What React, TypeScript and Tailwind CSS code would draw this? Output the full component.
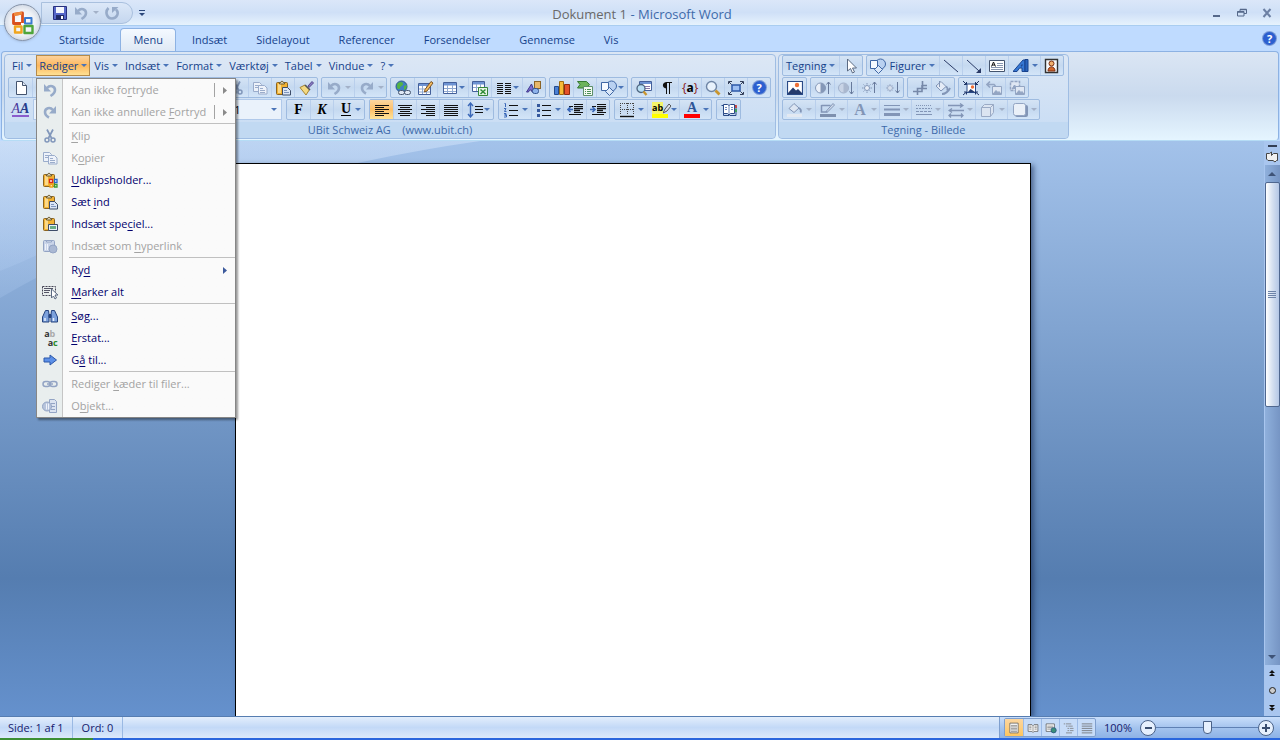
import { useState, type ReactNode } from 'react';
import clsx from 'clsx';

// --- Icons, all drawn on a 16x16 grid ---
const clipboard = (
  <>
    <rect x="1.500" y="2.500" width="11" height="12" rx="1" fill="#f2b233" stroke="#8a6420" />
    <path d="M3 4h3v9H3z" fill="#fbd98a" />
    <path d="M4.500 4V2.500h1.200C5.800.800 8.200.800 8.300 2.500h1.200V4z" fill="#e8dfc0" stroke="#6b5a30" />
  </>
);

const ICONS: Record<string, ReactNode> = {
  save: (
    <>
      <path d="M1.500 1.500h13v13h-13z" fill="#5566c8" stroke="#27307e" />
      <path d="M4 2h8v6H4z" fill="#f3f6fd" />
      <path d="M4 10h8v4.500H4z" fill="#1f2a66" />
      <path d="M9 11h2v3H9z" fill="#fff" />
    </>
  ),
  undo: (
    <>
      <path d="M5 6C8 2.500 13 4 13 8c0 3-2 4.500-4.500 6" fill="none" stroke="#97abc9" strokeWidth="2.600" />
      <path d="M2 2v7.500h7z" fill="#97abc9" />
    </>
  ),
  redo: (
    <>
      <path d="M11 6C8 2.500 3 4 3 8c0 3 2 4.500 4 5.500" fill="none" stroke="#97abc9" strokeWidth="2.600" />
      <path d="M14 2v7.500H7z" fill="#97abc9" />
    </>
  ),
  repeat: (
    <>
      <path d="M4.500 3C.500 7 3 13.500 8 13.500S15.500 8 12 4.500" fill="none" stroke="#97abc9" strokeWidth="2.600" />
      <path d="M8 8V2h6.500z" fill="#97abc9" />
    </>
  ),
  new: (
    <>
      <path d="M3.500 1.500h6l4 4v9h-10z" fill="#fff" stroke="#44546e" />
      <path d="M9.500 1.500v4h4" fill="#dfe7f3" stroke="#44546e" />
    </>
  ),
  open: <path d="M1.500 13.500v-9h5l1 1.500h6v7.500z" fill="#f5c65a" stroke="#94702b" />,
  mail: <path d="M1.500 4.500h13v8h-13zl6.500 5 6.500-5" fill="#fff" stroke="#55698c" />,
  print: (
    <>
      <path d="M4.500 1.500h7v5h-7z" fill="#fff" stroke="#55698c" />
      <path d="M1.500 6.500h13v6h-13z" fill="#c4cfe0" stroke="#55698c" />
    </>
  ),
  cut: (
    <g fill="none" stroke="#8197bb">
      <path d="M5 1.500 9.500 10M11 1.500 6.500 10" strokeWidth="1.700" />
      <circle cx="5" cy="12" r="2" strokeWidth="1.500" />
      <circle cx="11" cy="12" r="2" strokeWidth="1.500" />
    </g>
  ),
  copy: (
    <g fill="#edf2fa" stroke="#9aaccb">
      <path d="M1.500 2.500h6l2 2v7h-8z" />
      <path d="M3 5.500h4M3 7.500h4" />
      <path d="M6.500 5.500h6l2.500 2.500v6H6.500z" />
      <path d="M8 8.500h3M8 10.500h5M8 12.500h5" />
    </g>
  ),
  paste: (
    <>
      {clipboard}
      <path d="M7.500 7.500h5l3 3v4.500h-8z" fill="#dbe6f7" stroke="#3d4c68" />
      <path d="M9 10.500h3M9 12.500h5" stroke="#7f95bd" />
    </>
  ),
  clips: (
    <>
      {clipboard}
      <g fill="#fff" strokeWidth="1.300">
        <path d="M7.500 7.500h3v3h-3z" stroke="#d92a1c" />
        <path d="M12.500 7.500h2.500v3h-2.500z" stroke="#2867cc" />
        <path d="M8 12.500h2.500v2.500H8z" stroke="#eda216" />
        <path d="M12.500 12.500h2.500v2.500h-2.500z" stroke="#3a9a2e" />
      </g>
    </>
  ),
  pasteSpecial: (
    <>
      {clipboard}
      <path d="M6.500 8.500h9v6h-9z" fill="#e9f1fb" stroke="#3d4c68" />
      <path d="M8 10h6v3H8z" fill="#69ad86" />
    </>
  ),
  pasteLink: (
    <g stroke="#93a4c4">
      <rect x="1.500" y="2.500" width="11" height="11" rx="1" fill="#c9d4e8" />
      <path d="M4.500 4V2.500h5V4z" fill="#e6ecf6" />
      <path d="M3.500 6v6M5.500 6v6" stroke="#eef2fa" />
      <circle cx="11" cy="11" r="4" fill="#a9b8d3" />
    </g>
  ),
  brush: (
    <>
      <path d="m10 6 4-4.500L15.500 3 11 7.500z" fill="#8a7cc4" stroke="#54488c" />
      <path d="M2 7.500 7 5l4.500 4.500L8 15z" fill="#f3d981" stroke="#a78532" />
      <path d="m7 5 5 5" stroke="#555" strokeWidth="1.600" />
    </>
  ),
  globe: (
    <>
      <circle cx="6.500" cy="6.500" r="5.500" fill="#3f7fc4" stroke="#2c5a8a" />
      <path d="M3 3c3-2 5-1 5 1S5 6 5 8s-3 1-3-1 0-3 1-4zM9 6l3-1-1 4-2 1z" fill="#54b345" />
      <rect x="3.500" y="10.500" width="6" height="4" rx="2" fill="#dfe8f5" stroke="#46566f" />
      <rect x="9.500" y="10.500" width="6" height="4" rx="2" fill="#dfe8f5" stroke="#46566f" />
    </>
  ),
  tablePen: (
    <>
      <path d="M.500 3.500h12v11H.500z" fill="#fff" stroke="#44609a" />
      <path d="M1 4h11v2H1z" fill="#6d93d3" />
      <path d="M1 9h11M1 12h11M4.500 6v8M8.500 6v8" stroke="#8fa8d0" />
      <path d="m7 9.500 6-8 2 1.500-6 8-2.500 1z" fill="#f4bd62" stroke="#7c5220" />
    </>
  ),
  table: (
    <>
      <path d="M1.500 2.500h13v11h-13z" fill="#fff" stroke="#44609a" />
      <path d="M2 3h12v2.500H2z" fill="#6d93d3" />
      <path d="M2 8.500h12M2 11.500h12M5.500 5v8M10.500 5v8" stroke="#8fa8d0" />
    </>
  ),
  excel: (
    <>
      <path d="M.500 1.500h12v10H.500z" fill="#fff" stroke="#44609a" />
      <path d="M1 2h11v2.500H1z" fill="#6d93d3" />
      <path d="M1 7.500h11M4.500 4v7M8.500 4v7" stroke="#8fa8d0" />
      <path d="M6.500 7.500h9v8h-9z" fill="#e6f4e4" stroke="#34863a" />
      <path d="m8.500 9.500 5 4.500M13.500 9.500l-5 4.500" stroke="#2c8a34" strokeWidth="1.500" />
    </>
  ),
  columns: <path d="M1 3.500h6M1 5.500h6M1 7.500h6M1 9.500h6M1 11.500h6M1 13.500h6M9 3.500h6M9 5.500h6M9 7.500h6M9 9.500h6M9 11.500h6M9 13.500h6" stroke="#111" />,
  drawing: (
    <>
      <rect x="8.500" y="1.500" width="6" height="7" fill="#e7b76a" stroke="#8b6427" />
      <path d="m.500 12 5-8 3 8H6l-.500-2H3.500L2.500 12z" fill="#7a70d0" stroke="#40368c" />
      <rect x="6.500" y="8.500" width="6" height="5" rx="2" fill="#8db2ea" stroke="#33558f" />
    </>
  ),
  chart: (
    <>
      <path d="M.500 6.500h4v8h-4z" fill="#4a80d4" stroke="#244a8c" />
      <path d="M5.500 1.500h4v13h-4z" fill="#f7ba36" stroke="#a06c12" />
      <path d="M10.500 4.500h5v10h-5z" fill="#e4512a" stroke="#8f2a10" />
    </>
  ),
  smartArt: (
    <>
      <path d="M.500 1.500h9l3 3-3 3.500h-9l2.500-3.500z" fill="#6cb35c" stroke="#357a32" />
      <path d="M6.500 6.500h9v9h-9z" fill="#f5faf3" stroke="#5c8f6a" />
      <path d="M8 9.500h1M10 9.500h4M8 11.500h1M10 11.500h4M8 13.500h1M10 13.500h4" stroke="#4a8f55" />
    </>
  ),
  shapes: (
    <g stroke="#3f67a5">
      <circle cx="10.500" cy="6" r="5" fill="#b9d1f1" />
      <path d="M.500 2.500h7v8h-7z" fill="#f6faff" />
      <path d="m8.500 7.500 4 4-4 4-4-4z" fill="#dae7f8" />
    </g>
  ),
  docMap: (
    <>
      <path d="M3.500 1.500h12v9h-12z" fill="#fff" stroke="#44609a" />
      <path d="M4 2h11v2H4z" fill="#6d93d3" />
      <path d="M9 6.500h5M9 8.500h5" stroke="#87a" />
      <circle cx="5" cy="8.500" r="4" fill="#b9e0f4" stroke="#4d647f" strokeWidth="1.300" />
      <path d="m7.500 11.500 3 3.500" stroke="#c9962f" strokeWidth="2.400" />
    </>
  ),
  pilcrow: (
    <>
      <path d="M8 2C2.500 2 2.500 8.500 8 8.500z" fill="#111" />
      <path d="M7.500 2v12M10.500 2v12M7 2.500h6" fill="none" stroke="#111" />
    </>
  ),
  zoom: (
    <>
      <circle cx="6.500" cy="6.500" r="5" fill="#e8f2fc" stroke="#6f86a6" strokeWidth="1.400" />
      <path d="m10.500 10.500 4 4" stroke="#c9962f" strokeWidth="2.800" />
    </>
  ),
  fit: (
    <>
      <rect x="4" y="5" width="8" height="6" fill="#9dbff2" stroke="#2d58a8" strokeWidth="1.500" />
      <path d="M.500 4V1.500H4M1 2l2.500 2.500M12 1.500h3.500V4M15 2l-2.500 2.500M.500 12v2.500H4M1 14l2.500-2.500M12 14.500h3.500V12M15 14l-2.500-2.500" fill="none" stroke="#333e58" />
    </>
  ),
  alignLeft: <path d="M1 3.500h14M1 5.500h9M1 7.500h14M1 9.500h9M1 11.500h14M1 13.500h9" stroke="#111" />,
  alignCenter: <path d="M1 3.500h14M3 5.500h10M1 7.500h14M3 9.500h10M1 11.500h14M3 13.500h10" stroke="#111" />,
  alignRight: <path d="M1 3.500h14M6 5.500h9M1 7.500h14M6 9.500h9M1 11.500h14M6 13.500h9" stroke="#111" />,
  justify: <path d="M1 3.500h14M1 5.500h14M1 7.500h14M1 9.500h14M1 11.500h14M1 13.500h14" stroke="#111" />,
  spacing: (
    <>
      <path d="M8 4.500h8M8 7.500h8M8 10.500h8" stroke="#111" />
      <path d="M3.500 1v14M1 4l2.500-3L6 4M1 12l2.500 3L6 12" fill="none" stroke="#3b68b8" strokeWidth="1.400" />
    </>
  ),
  numbers: (
    <>
      <path d="M6 3.500h9M6 8.500h9M6 13.500h9" stroke="#111" />
      <path d="M1.500 1.500h1V5M1 6.500h2L1.500 9.500h2M1 11.500h2v1.500H1.500h2v2H1" fill="none" stroke="#3b68b8" />
    </>
  ),
  bullets: (
    <>
      <path d="M6 3.500h9M6 8.500h9M6 13.500h9" stroke="#111" />
      <path d="M1 2h3v3H1zM1 7h3v3H1zM1 12h3v3H1z" fill="#35589d" />
    </>
  ),
  outdent: (
    <>
      <path d="M7 2.500h9M2 4.500h4M7 4.500h9M7 10.500h9M2 12.500h12" stroke="#111" />
      <path d="M7 6.500h9M7 8.500h6" stroke="#111" strokeWidth="1.600" />
      <path d="M.500 7.500h5.500M3.500 5l-2.500 2.500L3.500 10" fill="none" stroke="#3b68b8" strokeWidth="1.600" />
    </>
  ),
  indent: (
    <>
      <path d="M7 2.500h9M2 4.500h4M7 4.500h9M7 10.500h9M2 12.500h12" stroke="#111" />
      <path d="M7 6.500h9M7 8.500h6" stroke="#111" strokeWidth="1.600" />
      <path d="M0 7.500h5.500M2.500 5 5 7.500 2.500 10" fill="none" stroke="#3b68b8" strokeWidth="1.600" />
    </>
  ),
  border: (
    <>
      <path d="M1.500 1v12M14.500 1v12M8.500 1v12M1 1.500h14M1 7.500h14" stroke="#444" strokeDasharray="1 1" />
      <path d="M1 14.500h14" stroke="#111" strokeWidth="1.400" />
    </>
  ),
  book: (
    <>
      <path d="M.500 3.500h2v10h5.500l.500.500.500-.500h6v-10h-2" fill="#c7d9f2" stroke="#2a4a86" />
      <path d="M2.500 2.500h4l1.500 1 1.500-1h4v9h-4L8 13l-1.500-1.500h-4z" fill="#fff" stroke="#2a4a86" />
      <path d="M8 4v8M4 5.500h2M4 7.500h2M10 5.500h2M10 7.500h2" stroke="#6c8ac0" />
      <path d="M15 3v3" stroke="#d32" strokeWidth="1.500" />
      <path d="M15 7v3" stroke="#3a3" strokeWidth="1.500" />
    </>
  ),
  cursor: <path d="M4.500 1v12l3-2.500L9.500 15l2-1-2-4h4z" fill="#fff" stroke="#5b6a82" />,
  line: <path d="m1 2 14 12" stroke="#2a3a66" />,
  arrow: (
    <>
      <path d="m1 2 12 11" stroke="#2a3a66" />
      <path d="M15 15v-5l-5 5z" fill="#2a3a66" />
    </>
  ),
  textBox: (
    <>
      <path d="M.500 2.500h15v11H.500z" fill="#fff" stroke="#44546e" />
      <path d="M2.500 8.500 4.500 4l2 4.500M3 7h3" fill="none" stroke="#111" />
      <path d="M8 5.500h6M8 7.500h6M2 9.500h12M2 11.500h12" stroke="#8796b0" />
    </>
  ),
  wordArt: (
    <>
      <path d="M0 13.500 10 2h2v11.500H9v-3.500H6.500L4 13.500zM8 8h1V6.500z" fill="#3678d4" stroke="#1c4690" />
      <path d="M12 1.500h3v12h-3z" fill="#2a64bc" stroke="#17408c" />
    </>
  ),
  person: (
    <>
      <path d="M1.500 1.500h12v13h-12z" fill="#f6f8fb" stroke="#333" strokeWidth="1.400" />
      <circle cx="7.500" cy="5.500" r="2.500" fill="#f1b06e" stroke="#7d2f12" />
      <path d="M4 13c0-5.500 7-5.500 7 0z" fill="#d3682c" stroke="#7d2f12" />
    </>
  ),
  picture: (
    <>
      <path d="M.500 1.500h15v13H.500z" fill="#fff" stroke="#2a4a86" strokeWidth="1.200" />
      <circle cx="10" cy="5" r="2.200" fill="#ee7038" />
      <path d="m1 13 5-5.500 3 3 2-1.500 4 4v1H1z" fill="#243b6e" />
    </>
  ),
  contrastUp: (
    <>
      <circle cx="5.500" cy="8" r="5" fill="#eaf0f9" stroke="#8598b8" />
      <path d="M5.500 3a5 5 0 0 1 0 10z" fill="#8598b8" />
      <path d="M13.500 2v12M11.500 4.500l2-2.500 2 2.500" fill="none" stroke="#67799b" />
    </>
  ),
  contrastDown: (
    <>
      <circle cx="5.500" cy="8" r="5" fill="#c9d4e6" stroke="#9fafca" />
      <path d="M5.500 3a5 5 0 0 1 0 10z" fill="#aab8cf" />
      <path d="M13.500 2v12M11.500 11.500l2 2.500 2-2.500" fill="none" stroke="#67799b" />
    </>
  ),
  brightUp: (
    <g fill="none" stroke="#8598b8">
      <circle cx="6" cy="8" r="2.500" fill="#eaf0f9" />
      <path d="M6 3v1.500M6 11.500V13M1 8h1.500M9.500 8H11M2.500 4.500l1 1M9.500 4.500l-1 1M2.500 11.500l1-1M9.500 11.500l-1-1" />
      <path d="M13.500 2v11M11.500 4.500l2-2.500 2 2.500" stroke="#67799b" />
    </g>
  ),
  brightDown: (
    <g fill="none" stroke="#9fafca">
      <circle cx="6" cy="8" r="2.500" fill="#d6dfed" />
      <path d="M6 4v1M6 11v1M2 8h1M9 8h1M3.500 5.500l.500.500M8.500 5.500 8 6M3.500 10.500 4 10M8.500 10.500 8 10" />
      <path d="M13.500 2v11M11.500 10.500l2 2.500 2-2.500" stroke="#67799b" />
    </g>
  ),
  crop: <path d="M5.500 15V8.500H15M1 11.500h9V5M10 5.500h5M10.500 1v7" fill="none" stroke="#7688a8" strokeWidth="1.600" />,
  bucket: (
    <g stroke="#8295b6">
      <path d="m1 6 5-4.500 5 5L6 11z" fill="#e4ebf6" />
      <path d="M4.500 1v6" fill="none" />
      <path d="M11 6.500c2 1 1.500 3 1 4" fill="none" strokeWidth="1.500" />
      <path d="M7 14c3 0 6-2 8-6" fill="none" strokeWidth="2" />
    </g>
  ),
  compress: (
    <>
      <path d="M4 4h8.500v8.500H4z" fill="#fff" stroke="#2a4a86" />
      <circle cx="9.500" cy="7" r="1.700" fill="#ee7038" />
      <path d="m5 12 2.500-3 4.500 3z" fill="#243b6e" />
      <path d="m0 1 3.500 3.500M3.500 2v2.500H1M16 1l-3.500 3.500M12.500 2v2.500H15M0 15l3.500-3M3.500 14.500V12H1M16 15l-3.500-3M12.500 14.500V12H15" fill="none" stroke="#1f3568" />
    </>
  ),
  reset: (
    <g stroke="#93a5c3">
      <path d="M6.500 6.500h9v8h-9z" fill="#dfe7f3" />
      <path d="m7 14 3-3.500 2 2 1-1 2 2.500z" fill="#93a5c3" />
      <path d="M4 1.500 1 4.500l3 3M1.500 4.500H8L9.500 6" fill="none" strokeWidth="1.700" />
    </g>
  ),
  group: (
    <g stroke="#93a5c3">
      <path d="M1.500 1.500h9v9h-9z" fill="#dfe7f3" strokeWidth="1.500" strokeDasharray="3 1" />
      <path d="m3 9 2.500-4L8 8z" fill="#93a5c3" />
      <path d="M6.500 6.500h9v8h-9z" fill="#dfe7f3" />
      <path d="m7 14 3-3.500 2 2 1-1 2 2.500z" fill="#93a5c3" />
    </g>
  ),
  fill: (
    <g stroke="#8295b6">
      <path d="m2 6.500 5-5L12 6 7 10.500z" fill="#dce5f2" />
      <path d="M12 6c2.500 1.500 2 3.500 1.500 4.500" fill="none" strokeWidth="1.700" />
      <path d="M0 13.500h15" stroke="#e3e9f2" strokeWidth="3" />
    </g>
  ),
  pen: (
    <>
      <path d="M1.500 3.500h9M1.500 3v7h6" fill="none" stroke="#8295b6" strokeWidth="1.500" />
      <path d="m6 9.500 7-8 1.500 1.500-7 7z" fill="#cfdaea" stroke="#8295b6" />
      <path d="M0 13.500h16" stroke="#7e90ae" strokeWidth="3" />
    </>
  ),
  lineStyle: (
    <>
      <path d="M0 3.500h16" stroke="#8295b6" />
      <path d="M0 7.500h16" stroke="#8295b6" strokeWidth="2" />
      <path d="M0 12.500h16" stroke="#8295b6" strokeWidth="3" />
    </>
  ),
  dashes: (
    <g stroke="#8295b6">
      <path d="M0 3.500h16" strokeDasharray="1 1" />
      <path d="M0 6.500h16" strokeDasharray="2 1" />
      <path d="M0 9.500h16" strokeDasharray="3 1" />
      <path d="M0 12.500h16" />
    </g>
  ),
  arrows: (
    <g fill="none" stroke="#8295b6" strokeWidth="1.300">
      <path d="M0 3.500h14M12 1.500l3 2-3 2" />
      <path d="M2 8.500h14M4 6.500l-3 2 3 2" />
      <path d="M1 13.500h14M3 11.500l-2 2 2 2M13 11.500l2 2-2 2" />
    </g>
  ),
  cube: (
    <g fill="#dbe4f1" stroke="#9aaac5">
      <path d="m1.500 5.500 3-3h9v8l-3 4" />
      <path d="M1.500 5.500h9v9h-9zM10.500 5.500l3-3" />
    </g>
  ),
  shadow: (
    <>
      <rect x="3" y="3" width="13" height="12" rx="2" fill="#8295b6" />
      <rect x="1.500" y="1.500" width="12" height="12" rx="2" fill="#eaf0f8" stroke="#93a5c3" />
    </>
  ),
  select: (
    <>
      <path d="M.500 2.500h13v9H.500z" fill="none" stroke="#445" strokeDasharray="2 1" />
      <path d="M2 4.500h9M2 6.500h6M2 8.500h5" stroke="#556" />
      <path d="M9.500 5v9l2-2 1.500 3 1.500-1-1.500-3h3z" fill="#fff" stroke="#5b6a82" />
    </>
  ),
  find: (
    <g fill="#7ca1dc" stroke="#24437f">
      <path d="M3.500 2.500h3l.500 4v7.500H.500V9z" />
      <path d="M9.500 2.500h3l3 6.500v5H9V6.500z" />
      <path d="M7 6.500h2v3H7z" fill="#24437f" />
      <path d="M3 10v3M11.500 10v3" stroke="#e6effc" strokeWidth="1.500" />
    </g>
  ),
  goto: <path d="M2 6h6V3l6.500 5L8 13v-3H2z" fill="#5c90e8" stroke="#2b57a8" />,
  link: (
    <g fill="none" stroke="#93a4c4" strokeWidth="1.500">
      <rect x="1" y="5.500" width="7" height="5" rx="2.500" />
      <rect x="8" y="5.500" width="7" height="5" rx="2.500" />
      <path d="M5 8h6" />
    </g>
  ),
  object: (
    <g fill="#dbe3f0" stroke="#93a4c4">
      <path d="M7.500 1.500h5l2 2v11h-7z" />
      <path d="M9 5.500h4M9 8.500h4M9 11.500h4" />
      <circle cx="5" cy="8.500" r="4.500" fill="#b7c4dc" />
      <path d="M4.500 5.500v6M6.500 5.500v6" stroke="#eef2fa" />
    </g>
  ),
  pageView: (
    <>
      <path d="M2.500 1.500h11v13h-11z" fill="#fff" stroke="#555" />
      <path d="M4 4.500h8M4 6.500h8M4 8.500h8M4 10.500h8M4 12.500h8" stroke="#777" />
    </>
  ),
  readView: (
    <>
      <path d="M1.500 3.500h5L8 5l1.500-1.500h5v9h-5L8 14l-1.500-1.500h-5z" fill="#fff" stroke="#555" />
      <path d="M8 5v8M3 5.500h3M3 7.500h3M3 9.500h3M10 5.500h3M10 7.500h3M10 9.500h3" stroke="#777" />
    </>
  ),
  webView: (
    <>
      <path d="M1.500 2.500h11v10h-11z" fill="#fff" stroke="#555" />
      <path d="M3 5.500h8M3 7.500h8M3 9.500h5" stroke="#777" />
      <circle cx="11.500" cy="11" r="3.500" fill="#3a8f7a" stroke="#25527f" />
    </>
  ),
  outlineView: <path d="M1 2.500h2M4 2.500h7M4 5.500h2M7 5.500h6M6 8.500h2M9 8.500h5M6 11.500h2M9 11.500h5M4 14.500h8" stroke="#777" />,
  draftView: <path d="M1 2.500h14M1 5.500h14M1 8.500h14M1 11.500h14M1 14.500h14" stroke="#666" />,
};

// letter glyphs are kept as text
const TEXT_ICONS: Record<string, ReactNode> = {
  bold: <span className="font-['Liberation_Serif',serif] text-sm font-bold text-black">F</span>,
  italic: <span className="font-['Liberation_Serif',serif] text-sm font-bold italic text-black">K</span>,
  underline: <span className="border-b border-black font-['Liberation_Serif',serif] text-sm leading-3 font-bold text-black">U</span>,
  styles: (
    <span className="border-b-2 border-[#8a5ccc] font-['Liberation_Serif',serif] text-sm leading-3 italic text-[#4a3a9c]">
      A<b className="text-[#253c8c]">A</b>
    </span>
  ),
  codes: (
    <span className="text-xs font-bold text-black">
      <span className="font-normal text-[#8c1a1a]">{'{'}</span>a<span className="font-normal text-[#8c1a1a]">{'}'}</span>
    </span>
  ),
  highlight: (
    <span className="flex h-4 w-4 flex-col justify-between">
      <span className="flex text-[9px] leading-3 font-bold text-black">
        <span className="bg-[#f4f46a]">ab</span>
        <svg className="h-3 w-2 shrink-0" viewBox="0 0 8 12"><path d="m0 11 2-4 4-5 2 2-4 5z" fill="#d9dfe8" stroke="#555" /></svg>
      </span>
      <span className="h-1 bg-[#ffff00]" />
    </span>
  ),
  fontColor: <span className="flex h-4 w-4 flex-col items-center justify-between border-b-4 border-[#ff0000] font-['Liberation_Serif',serif] text-sm leading-3 font-bold text-[#2f5597]">A</span>,
  letterGrey: <span className="font-['Liberation_Serif',serif] text-base font-bold text-[#8295b6]">A</span>,
  replace: (
    <span className="flex w-4 flex-col text-[9px] leading-none font-bold text-[#333]">
      <span>a<span className="text-[#aaa]">b</span></span>
      <span className="self-end">a<span className="text-[#2a8a2a]">c</span></span>
    </span>
  ),
  help: (
    <span className="flex size-[13px] items-center justify-center rounded-full bg-[#2c5fd0] text-[11px] leading-3 font-bold text-white ring-1 ring-[#7d9cd6]">?</span>
  ),
};

function Icon({ name }: { name: string }) {
  if (TEXT_ICONS[name]) return TEXT_ICONS[name];
  return <svg viewBox="0 0 16 16" className="size-4 shrink-0" aria-hidden="true">{ICONS[name]}</svg>;
}

function Caret({ muted }: { muted?: boolean }) {
  return (
    <svg viewBox="0 0 6 3" className="h-[3px] w-1.5 shrink-0" aria-hidden="true">
      <path d="M0 0h6L3 3z" fill={muted ? '#a3b1c8' : '#4a74b8'} />
    </svg>
  );
}

// --- Toolbars ---
interface Tool {
  icon: string;
  label: string;
  split?: 'narrow' | 'wide';
  active?: boolean;
  disabled?: boolean;
  text?: boolean;
}

const CLIP_TOOLS: Tool[] = [
  { icon: 'new', label: 'Ny' },
  { icon: 'open', label: 'Åbn' },
  { icon: 'save', label: 'Gem' },
  { icon: 'mail', label: 'E-mail' },
  { icon: 'print', label: 'Udskriv' },
  { icon: 'zoom', label: 'Vis udskrift' },
  { icon: 'book', label: 'Stavekontrol' },
  { icon: 'docMap', label: 'Opslag', split: 'wide' },
  { icon: 'table', label: 'Oversæt' },
  { icon: 'cut', label: 'Klip', disabled: true },
  { icon: 'copy', label: 'Kopier', disabled: true },
  { icon: 'paste', label: 'Sæt ind' },
  { icon: 'brush', label: 'Formatpensel' },
];

const ROW_ONE: Tool[][] = [
  CLIP_TOOLS,
  [
    { icon: 'undo', label: 'Fortryd', split: 'wide', disabled: true },
    { icon: 'redo', label: 'Annuller Fortryd', split: 'wide', disabled: true },
  ],
  [
    { icon: 'globe', label: 'Hyperlink' },
    { icon: 'tablePen', label: 'Tegn tabel' },
    { icon: 'table', label: 'Indsæt tabel', split: 'narrow' },
    { icon: 'excel', label: 'Excel-regneark' },
    { icon: 'columns', label: 'Kolonner', split: 'narrow' },
    { icon: 'drawing', label: 'Tegning' },
  ],
  [
    { icon: 'chart', label: 'Diagram' },
    { icon: 'smartArt', label: 'SmartArt' },
    { icon: 'shapes', label: 'Figurer', split: 'narrow' },
  ],
  [
    { icon: 'docMap', label: 'Dokumentoversigt' },
    { icon: 'pilcrow', label: 'Vis alt' },
    { icon: 'codes', label: 'Feltkoder' },
    { icon: 'zoom', label: 'Zoom' },
    { icon: 'fit', label: 'Fuld skærm' },
    { icon: 'help', label: 'Hjælp til Word' },
  ],
];

const ROW_TWO: Tool[][] = [
  [
    { icon: 'bold', label: 'Fed' },
    { icon: 'italic', label: 'Kursiv' },
    { icon: 'underline', label: 'Understreget', split: 'narrow' },
  ],
  [
    { icon: 'alignLeft', label: 'Venstrejuster', active: true },
    { icon: 'alignCenter', label: 'Centrer' },
    { icon: 'alignRight', label: 'Højrejuster' },
    { icon: 'justify', label: 'Lige margener' },
    { icon: 'spacing', label: 'Linjeafstand', split: 'narrow' },
  ],
  [
    { icon: 'numbers', label: 'Nummerering', split: 'wide' },
    { icon: 'bullets', label: 'Punkttegn', split: 'wide' },
    { icon: 'outdent', label: 'Formindsk indrykning' },
    { icon: 'indent', label: 'Forøg indrykning' },
  ],
  [
    { icon: 'border', label: 'Kanter', split: 'wide' },
    { icon: 'highlight', label: 'Fremhævning', split: 'wide' },
    { icon: 'fontColor', label: 'Skriftfarve', split: 'wide' },
  ],
  [{ icon: 'book', label: 'Opslag' }],
];

const DRAW_ROWS: Tool[][][] = [
  [
    [
      { icon: '', label: 'Tegning', text: true },
      { icon: 'cursor', label: 'Marker objekter' },
    ],
    [
      { icon: 'shapes', label: 'Figurer', text: true },
      { icon: 'line', label: 'Streg' },
      { icon: 'arrow', label: 'Pil' },
      { icon: 'textBox', label: 'Tekstboks' },
      { icon: 'wordArt', label: 'WordArt', split: 'wide' },
      { icon: 'person', label: 'Multimedieklip' },
    ],
  ],
  [
    [{ icon: 'picture', label: 'Billede' }],
    [
      { icon: 'contrastUp', label: 'Mere kontrast', disabled: true },
      { icon: 'contrastDown', label: 'Mindre kontrast', disabled: true },
      { icon: 'brightUp', label: 'Mere lysstyrke', disabled: true },
      { icon: 'brightDown', label: 'Mindre lysstyrke', disabled: true },
    ],
    [
      { icon: 'crop', label: 'Beskær', disabled: true },
      { icon: 'bucket', label: 'Omfarv', disabled: true },
    ],
    [
      { icon: 'compress', label: 'Komprimer billeder' },
      { icon: 'reset', label: 'Nulstil billede', disabled: true },
      { icon: 'group', label: 'Gruppér', disabled: true },
    ],
  ],
  [
    [
      { icon: 'fill', label: 'Fyldfarve', split: 'wide', disabled: true },
      { icon: 'pen', label: 'Stregfarve', split: 'wide', disabled: true },
      { icon: 'letterGrey', label: 'Tekstfarve', split: 'wide', disabled: true },
      { icon: 'lineStyle', label: 'Stregtype', split: 'wide', disabled: true },
      { icon: 'dashes', label: 'Stiplet streg', split: 'wide', disabled: true },
      { icon: 'arrows', label: 'Piletype', split: 'wide', disabled: true },
      { icon: 'cube', label: '3D-effekt', split: 'wide', disabled: true },
      { icon: 'shadow', label: 'Skygge', split: 'wide', disabled: true },
    ],
  ],
];

function ToolButton({ tool }: { tool: Tool }) {
  if (tool.text) {
    return (
      <button type="button" className="flex items-center gap-[3px] pr-1 pl-[3px] text-[#15428b]">
        {tool.icon && <Icon name={tool.icon} />}
        <span>{tool.label}</span>
        <Caret />
      </button>
    );
  }
  return (
    <button
      type="button"
      aria-label={tool.label}
      disabled={tool.disabled}
      className={clsx(
        'flex items-center border-l border-[#b9cfec] first:border-l-0',
        tool.active && 'bg-linear-to-b from-[#fbd6a0] via-[#fdc068] to-[#fee49a]',
        !tool.split && 'w-[23px] justify-center',
        tool.split === 'narrow' && 'w-[31px] pl-[3px]',
        tool.split === 'wide' && 'w-8 gap-0.5 pl-[3px]',
      )}
    >
      <span className="flex w-[18px] shrink-0 items-center justify-center"><Icon name={tool.icon} /></span>
      {tool.split && <Caret muted={tool.disabled} />}
    </button>
  );
}

function ToolGroup({ tools }: { tools: Tool[] }) {
  return (
    <div className="flex h-[21px] rounded-xs border border-[#9ebbe0] bg-linear-to-b from-[#d5e4f5] via-[#c5d9f0] to-[#d3e5f8]">
      {tools.map(t => <ToolButton key={t.label} tool={t} />)}
    </div>
  );
}

// --- Rediger menu. An underscore stands before the access key ---
interface MenuEntry {
  label?: string;
  icon?: string;
  disabled?: boolean;
  sub?: boolean;
  bar?: boolean;
}

const MENU: MenuEntry[] = [
  { label: 'Kan ikke fo_rtryde', icon: 'undo', disabled: true, sub: true, bar: true },
  { label: 'Kan ikke annullere _Fortryd', icon: 'redo', disabled: true, sub: true, bar: true },
  {},
  { label: '_Klip', icon: 'cut', disabled: true },
  { label: 'K_opier', icon: 'copy', disabled: true },
  { label: '_Udklipsholder...', icon: 'clips' },
  { label: 'Sæt _ind', icon: 'paste' },
  { label: 'Indsæt spe_ciel...', icon: 'pasteSpecial' },
  { label: 'Indsæt som _hyperlink', icon: 'pasteLink', disabled: true },
  {},
  { label: 'Ry_d', sub: true },
  { label: '_Marker alt', icon: 'select' },
  {},
  { label: '_Søg...', icon: 'find' },
  { label: '_Erstat...', icon: 'replace' },
  { label: 'G_å til...', icon: 'goto' },
  {},
  { label: 'Rediger _kæder til filer...', icon: 'link', disabled: true },
  { label: 'O_bjekt...', icon: 'object', disabled: true },
];

function MenuLabel({ text }: { text: string }) {
  const i = text.indexOf('_');
  return (
    <span className="flex-1 text-left whitespace-pre">
      {text.slice(0, i)}
      <span className="underline underline-offset-2">{text[i + 1]}</span>
      {text.slice(i + 2)}
    </span>
  );
}

function EditMenu() {
  return (
    <div
      role="menu"
      className="absolute top-full left-0 z-20 mt-0.5 w-[200px] border border-[#868686] bg-[#fafafa] bg-linear-to-r from-[#e9eeee] from-[25px] to-[#fafafa] to-[25px] shadow-[2px_2px_2px_rgba(0,0,0,0.4)]"
    >
      {MENU.map((m, i) =>
        m.label ? (
          <button
            key={m.label}
            type="button"
            role="menuitem"
            disabled={m.disabled}
            className={clsx('flex h-[22px] w-full items-center pr-2', m.disabled ? 'text-[#a3a3a3]' : 'text-[#00006d]')}
          >
            <span className="mr-2 flex h-full w-[26px] shrink-0 items-center justify-center border-r border-[#c5c5c5]">
              {m.icon && <Icon name={m.icon} />}
            </span>
            <MenuLabel text={m.label} />
            {m.bar && <span className="mr-2 h-3.5 w-px bg-[#a3a3a3]" />}
            {m.sub && (
              <svg viewBox="0 0 4 7" className="h-[7px] w-1" aria-hidden="true">
                <path d="M0 0v7l4-3.500z" fill={m.disabled ? '#8a8a8a' : '#3c5a9c'} />
              </svg>
            )}
          </button>
        ) : (
          <div key={i} role="separator" className="flex h-0.5">
            <span className="mr-1.5 w-[26px] border-r border-[#c5c5c5]" />
            <span className="h-px flex-1 bg-[#c0c0c0]" />
          </div>
        )
      )}
    </div>
  );
}

const MENUS = ['Fil', 'Rediger', 'Vis', 'Indsæt', 'Format', 'Værktøj', 'Tabel', 'Vindue', '?'];
const TABS = ['Startside', 'Menu', 'Indsæt', 'Sidelayout', 'Referencer', 'Forsendelser', 'Gennemse', 'Vis'];
const VIEWS = [
  { icon: 'pageView', label: 'Udskriftslayout' },
  { icon: 'readView', label: 'Fuldskærmslæsning' },
  { icon: 'webView', label: 'Weblayout' },
  { icon: 'outlineView', label: 'Disposition' },
  { icon: 'draftView', label: 'Kladde' },
];

function Panel({ title, children }: { title: ReactNode; children: ReactNode }) {
  return (
    <section className="flex flex-col rounded-sm border border-[#9fbde3] bg-linear-to-b from-[#dce7f5] to-[#c7dcf4]">
      <div className="flex flex-col gap-px pr-1 pl-[3px]">{children}</div>
      <h2 className="mt-0.5 h-4 rounded-b-sm bg-[#c1d9f2] text-center leading-4 whitespace-pre text-[#3e6aaa]">{title}</h2>
    </section>
  );
}

function Combo({ label, value, className }: { label: string; value: string; className: string }) {
  return (
    <div className={clsx('flex h-[21px] items-center border border-[#b0c9ea] bg-[#eaf2fb] pr-1', className)}>
      <select aria-label={label} className="min-w-0 flex-1 appearance-none pl-1 text-black outline-none">
        <option>{value}</option>
      </select>
      <Caret />
    </div>
  );
}

function TitleBar() {
  return (
    <header className="relative grid h-[26px] grid-cols-[1fr_auto_1fr] items-center border-b border-[#a9cdf0] bg-linear-to-b from-[#dbe7f9] via-[#cfe0f7] to-[#e6f2fd]">
      <button
        type="button"
        aria-label="Office-knap"
        className="absolute top-1 left-1 z-10 flex size-[37px] items-center justify-center rounded-full border border-[#8693a8] bg-radial from-white via-[#eef1f6] to-[#b4c0d3] shadow-sm"
      >
        <svg viewBox="0 0 24 24" className="size-6" fill="none" strokeLinejoin="round">
          <path d="M10 12.500H2.500V3.500L11.500 2v10" stroke="#d9501e" strokeWidth="2.800" />
          <path d="M14 7h6.500v5.500H14z" stroke="#3a7ad0" strokeWidth="2" />
          <path d="M4 15.500h6.500v6H4z" stroke="#f0a51e" strokeWidth="2.400" />
          <path d="M13.500 22h8v-7h-8z" stroke="#4fa53a" strokeWidth="2.400" />
          <path d="M3 3.500 11 2" stroke="#f08a3c" strokeWidth="2.800" />
        </svg>
      </button>
      <div className="flex items-center pl-[41px]">
        <div className="flex h-[22px] items-center gap-[5px] rounded-r-full border border-[#a9c0de] bg-linear-to-b from-[#dce8f8] to-[#c5d7ef] pr-3 pl-2.5">
          <button type="button" aria-label="Gem"><Icon name="save" /></button>
          <button type="button" aria-label="Fortryd" disabled className="flex items-center gap-1"><Icon name="undo" /><Caret muted /></button>
          <button type="button" aria-label="Gentag" disabled><Icon name="repeat" /></button>
        </div>
        <button type="button" aria-label="Tilpas værktøjslinjen Hurtig adgang" className="ml-1.5 flex flex-col items-center gap-0.5">
          <span className="h-px w-1.5 bg-[#2b477a]" />
          <svg viewBox="0 0 6 3" className="h-[3px] w-1.5"><path d="M0 0h6L3 3z" fill="#2b477a" /></svg>
        </button>
      </div>
      <h1 className="pt-0.5 pl-1 text-[13px] text-[#3e6aaa]"><span className="text-[#696969]">Dokument 1</span> - Microsoft Word</h1>
      <div className="flex items-center justify-end gap-[15px] pr-2">
        <button type="button" aria-label="Minimer"><svg viewBox="0 0 10 10" className="size-2.5"><path d="M1 8h7" stroke="#55688a" strokeWidth="2" /></svg></button>
        <button type="button" aria-label="Gendan">
          <svg viewBox="0 0 10 10" className="size-2.5" fill="none" stroke="#55688a">
            <path d="M3 3.500v-2h6.500v4H7" /><path d="M3 1.500h6.500M.500 4h6.500" strokeWidth="1.500" /><path d="M.500 3.500H7v4.500H.500z" />
          </svg>
        </button>
        <button type="button" aria-label="Luk"><svg viewBox="0 0 10 10" className="size-2.5"><path d="m1.500 1 7 8M8.500 1l-7 8" stroke="#6d80a4" strokeWidth="2" /></svg></button>
      </div>
    </header>
  );
}

function ScrollBar() {
  return (
    <div className="flex w-4 shrink-0 flex-col items-center bg-[#a9c6ef]">
      <span className="mt-1 h-0.5 w-[9px] bg-[#333f55]" />
      <button type="button" aria-label="Lineal" className="mt-1">
        <svg viewBox="0 0 12 12" className="size-3"><path d="M.500 2.500h3L5.500 1v3.500l2-2h4v7h-1L9 11 7 9.500H2L.500 8z" fill="#f1f1f1" stroke="#444" /></svg>
      </button>
      <div className="mt-0.5 flex w-[15px] flex-1 flex-col bg-linear-to-r from-[#8fb0dc] to-[#7695c4]">
        <button type="button" aria-label="Rul op" className="flex h-[17px] items-center justify-center">
          <svg viewBox="0 0 8 4" className="h-1 w-2"><path d="M0 4h8L4 0z" fill="#3e5377" /></svg>
        </button>
        <div className="flex basis-[45%] flex-col items-center justify-center gap-px rounded-xs border border-[#4f678f] bg-linear-to-r from-white via-[#d5e0f0] to-[#b4c7e6]">
          {[0, 1, 2, 3].map(i => <span key={i} className="h-px w-2 border-b border-[#6d83a8]" />)}
        </div>
        <div className="flex-1" />
        <button type="button" aria-label="Rul ned" className="flex h-[17px] items-center justify-center">
          <svg viewBox="0 0 8 4" className="h-1 w-2"><path d="M0 0h8L4 4z" fill="#3e5377" /></svg>
        </button>
      </div>
      <div className="flex h-[51px] flex-col items-center justify-around">
        <button type="button" aria-label="Forrige side"><svg viewBox="0 0 6 7" className="h-[7px] w-1.5"><path d="m3 0 3 3H0zM3 3l3 3H0z" fill="#111" /></svg></button>
        <button type="button" aria-label="Vælg gennemsynsobjekt" className="size-[7px] rounded-full border border-[#222] bg-[#ccc]" />
        <button type="button" aria-label="Næste side"><svg viewBox="0 0 6 7" className="h-[7px] w-1.5"><path d="M3 7 0 4h6zM3 4 0 1h6z" fill="#111" /></svg></button>
      </div>
    </div>
  );
}

function StatusBar({ zoom, onZoom }: { zoom: number; onZoom: (v: number) => void }) {
  return (
    <footer className="flex h-[22px] border-t border-[#567db1] bg-linear-to-b from-[#e3eefc] via-[#c3d9f7] to-[#dbe9fb] text-[#15206d]">
      <div className="flex items-center border-r border-[#9ab9e3] px-2">Side: 1 af 1</div>
      <div className="flex items-center border-r border-[#9ab9e3] px-[9px]">Ord: 0</div>
      <div className="flex-1" />
      <div className="flex items-center border-l border-[#7f9fce] bg-linear-to-b from-[#c9defb] via-[#a5c4ee] to-[#8db2e6] pl-1">
        <div className="flex h-[19px] rounded-xs border border-[#7f9fce] bg-[#c7dcf8]">
          {VIEWS.map((v, i) => (
            <button
              key={v.icon}
              type="button"
              aria-label={v.label}
              className={clsx('flex w-[18px] items-center justify-center border-l border-[#9dbbe6] first:border-l-0 [&>svg]:size-3', i === 0 && 'bg-linear-to-b from-[#fbd6a0] to-[#fec55c]')}
            >
              <Icon name={v.icon} />
            </button>
          ))}
        </div>
        <span className="px-2">{zoom}%</span>
        <button type="button" aria-label="Zoom ud" className="flex size-4 items-center justify-center rounded-full border border-[#4a6288] bg-[#e6f0fd]">
          <span className="h-0.5 w-[7px] bg-[#3b4f70]" />
        </button>
        <input
          type="range"
          aria-label="Zoom"
          min={0}
          max={200}
          value={zoom}
          onChange={e => onZoom(Number(e.target.value))}
          className="h-[15px] w-[102px] appearance-none bg-transparent bg-[linear-gradient(#5f80b3,#5f80b3)] bg-size-[100%_1px] bg-center bg-no-repeat [&::-webkit-slider-thumb]:h-[13px] [&::-webkit-slider-thumb]:w-[9px] [&::-webkit-slider-thumb]:appearance-none [&::-webkit-slider-thumb]:rounded-b-sm [&::-webkit-slider-thumb]:border [&::-webkit-slider-thumb]:border-[#4a6288] [&::-webkit-slider-thumb]:bg-[#e6f0fd]"
        />
        <button type="button" aria-label="Zoom ind" className="mr-1.5 flex size-4 items-center justify-center rounded-full border border-[#4a6288] bg-[#e6f0fd]">
          <svg viewBox="0 0 8 8" className="size-2"><path d="M0 4h8M4 0v8" stroke="#3b4f70" strokeWidth="2" /></svg>
        </button>
      </div>
    </footer>
  );
}

export default function App() {
  const [openMenu, setOpenMenu] = useState<string | null>('Rediger');
  const [zoom, setZoom] = useState(100);

  return (
    <div className="flex h-screen flex-col overflow-hidden bg-[#bfdbff] font-['Open_Sans','Noto_Sans',sans-serif] text-[11px] leading-4">
      <TitleBar />

      {/* Tabs */}
      <nav className="flex h-[25px] items-end bg-[#bfdbff] pr-1 pl-[46px]">
        <div className="flex h-[23px] flex-1 gap-[3px]">
          {TABS.map(t => (
            <button
              key={t}
              type="button"
              className={clsx('px-3 text-[#15428b]', t === 'Menu' ? 'rounded-t-sm border border-b-0 border-[#8db2e3] bg-linear-to-b from-[#f4f9ff] to-[#dfe9f5]' : 'border border-transparent')}
            >
              {t}
            </button>
          ))}
        </div>
        <button type="button" aria-label="Hjælp" className="mb-1.5"><Icon name="help" /></button>
      </nav>

      {/* Ribbon */}
      <div className="px-px">
        <div className="flex gap-0.5 rounded-sm border border-[#8db2e3] border-b-[#b5dcf5] bg-linear-to-b from-[#dbe6f4] via-[#cadaee] to-[#e5f5ff] px-0.5 pt-0.5 pb-px">
          <Panel title="UBit Schweiz AG    (www.ubit.ch)">
            <div className="flex h-[21px] gap-px pl-px">
              {MENUS.map(m => (
                <div key={m} className="relative flex">
                  <button
                    type="button"
                    aria-haspopup="menu"
                    onClick={() => setOpenMenu(openMenu === m ? null : m)}
                    className={clsx(
                      'flex items-center gap-[3px] border px-0.5 text-[#15428b]',
                      openMenu === m ? 'border-[#b58b4a] bg-linear-to-b from-[#fcd29b] via-[#fcb75c] to-[#fee093]' : 'border-transparent',
                    )}
                  >
                    {m}
                    <Caret />
                  </button>
                  {m === 'Rediger' && openMenu === m && <EditMenu />}
                </div>
              ))}
            </div>
            <div className="flex gap-[3px]">
              {ROW_ONE.map((g, i) => <ToolGroup key={i} tools={g} />)}
            </div>
            <div className="flex gap-1">
              <div className="flex">
                <button type="button" aria-label="Typografier" className="flex w-[25px] items-center justify-center"><Icon name="styles" /></button>
                <Combo label="Typografi" value="Normal" className="w-[90px]" />
                <Combo label="Skrifttype" value="Calibri" className="w-[100px]" />
                <Combo label="Skriftstørrelse" value="11" className="w-[59px]" />
              </div>
              {ROW_TWO.map((g, i) => <ToolGroup key={i} tools={g} />)}
            </div>
          </Panel>
          <Panel title="Tegning - Billede">
            {DRAW_ROWS.map((row, i) => (
              <div key={i} className="flex gap-[3px]">
                {row.map((g, j) => <ToolGroup key={j} tools={g} />)}
              </div>
            ))}
          </Panel>
        </div>
      </div>

      {/* Workspace */}
      <div className="flex min-h-0 flex-1">
        <main className="relative flex min-w-0 flex-1 justify-center overflow-hidden bg-linear-to-b from-[#a3c2ea] via-[#557db0] via-76% to-[#6591cd] pt-[22px] pl-0.5">
          <svg viewBox="0 0 480 200" className="absolute top-0 left-0 h-[200px] w-[480px]" aria-hidden="true">
            <defs>
              <linearGradient id="sheen" x1="0" y1="0" x2="0" y2="1">
                <stop offset="0" stopColor="#d6e6fb" stopOpacity="0.500" />
                <stop offset="1" stopColor="#b9d3f6" stopOpacity="0.200" />
              </linearGradient>
            </defs>
            <path d="M0 0h480Q200 40 0 157z" fill="url(#sheen)" />
            <path d="M0 0h160Q150 70 0 130z" fill="url(#sheen)" />
          </svg>
          <div className="relative w-[796px] border border-b-0 border-black bg-white shadow-[3px_2px_5px_rgba(20,40,80,0.55)]" />
        </main>
        <ScrollBar />
      </div>

      <StatusBar zoom={zoom} onZoom={setZoom} />
      <div className="h-0.5 bg-linear-to-r from-[#3c8f33] from-[93px] to-[#2a66dd] to-[93px]" />
    </div>
  );
}
